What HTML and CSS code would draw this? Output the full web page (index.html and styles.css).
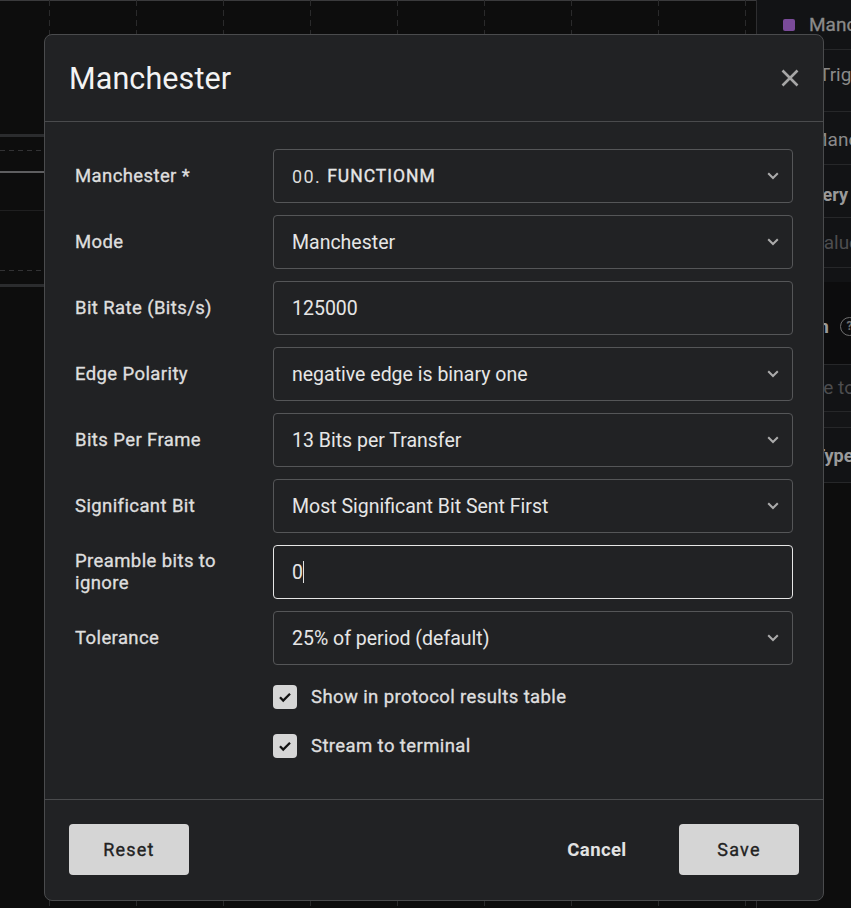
FILE: index.html
```html
<!DOCTYPE html>
<html lang="en">
<head>
<meta charset="utf-8">
<title>Manchester</title>
<link rel="stylesheet" href="styles.css">
</head>
<body>
<div class="app">
  <div class="chart">
    <svg class="grid" width="757" height="908" viewBox="0 0 757 908">
      <line x1="0" y1="0.5" x2="757" y2="0.5" stroke="#3a3a3c" stroke-width="1"/>
      <g stroke="#2a2a2b" stroke-width="1" stroke-dasharray="6 4">
        <line x1="49.5" y1="0" x2="49.5" y2="908"/>
        <line x1="136.5" y1="0" x2="136.5" y2="908"/>
        <line x1="223.5" y1="0" x2="223.5" y2="908"/>
        <line x1="310.5" y1="0" x2="310.5" y2="908"/>
        <line x1="397.5" y1="0" x2="397.5" y2="908"/>
        <line x1="484.5" y1="0" x2="484.5" y2="908"/>
        <line x1="571.5" y1="0" x2="571.5" y2="908"/>
        <line x1="658.5" y1="0" x2="658.5" y2="908"/>
        <line x1="745.5" y1="0" x2="745.5" y2="908"/>
      </g>
      <line x1="0" y1="135.5" x2="757" y2="135.5" stroke="#2b2c2e" stroke-width="3"/>
      <line x1="0" y1="150.5" x2="757" y2="150.5" stroke="#323234" stroke-width="1" stroke-dasharray="5 4"/>
      <line x1="0" y1="172" x2="757" y2="172" stroke="#5e5e60" stroke-width="2"/>
      <line x1="0" y1="210.5" x2="757" y2="210.5" stroke="#1f1f20" stroke-width="1"/>
      <line x1="0" y1="270.5" x2="757" y2="270.5" stroke="#323234" stroke-width="1" stroke-dasharray="5 4"/>
      <line x1="0" y1="285.5" x2="757" y2="285.5" stroke="#2b2c2e" stroke-width="3"/>
      <line x1="756.5" y1="0" x2="756.5" y2="908" stroke="#2e2e30" stroke-width="1"/>
    </svg>
  </div>
  <aside class="panel">
    <div class="p-head"><span class="swatch"></span><span class="p-title">Manchester</span></div>
    <div class="p-row r-trig">Trigger</div>
    <div class="p-row r-name">Manchester</div>
    <div class="p-row r-query">Query</div>
    <div class="p-row r-value">Value</div>
    <div class="p-gap"></div>
    <div class="p-section"><span class="p-sec-title">Function</span><span class="info">?</span></div>
    <div class="p-row r-type">Type to search</div>
    <div class="p-thin"></div>
    <div class="p-row r-typeh">Type</div>
    <div class="p-rest"></div>
  </aside>
</div>

<div class="dialog" role="dialog" aria-label="Manchester">
  <header class="dlg-head">
    <h1 class="dlg-title">Manchester</h1>
    <button class="close" aria-label="Close">
      <svg width="18" height="18" viewBox="0 0 18 18"><path d="M1.5 1.5L16.5 16.5M16.5 1.5L1.5 16.5" stroke="#a6a6a6" stroke-width="2.6" stroke-linecap="butt"/></svg>
    </button>
  </header>

  <div class="dlg-body">
    <div class="form">
      <div class="label">Manchester *</div>
      <div class="field select"><span class="val"><span class="num">00.</span><span class="fn">FUNCTIONM</span></span><svg class="chev" width="12" height="8" viewBox="0 0 12 8"><path d="M1.2 1.2L6 6l4.8-4.8" fill="none" stroke="#ababab" stroke-width="2"/></svg></div>

      <div class="label">Mode</div>
      <div class="field select"><span class="val">Manchester</span><svg class="chev" width="12" height="8" viewBox="0 0 12 8"><path d="M1.2 1.2L6 6l4.8-4.8" fill="none" stroke="#ababab" stroke-width="2"/></svg></div>

      <div class="label">Bit Rate (Bits/s)</div>
      <div class="field"><span class="val">125000</span></div>

      <div class="label">Edge Polarity</div>
      <div class="field select"><span class="val">negative edge is binary one</span><svg class="chev" width="12" height="8" viewBox="0 0 12 8"><path d="M1.2 1.2L6 6l4.8-4.8" fill="none" stroke="#ababab" stroke-width="2"/></svg></div>

      <div class="label">Bits Per Frame</div>
      <div class="field select"><span class="val">13 Bits per Transfer</span><svg class="chev" width="12" height="8" viewBox="0 0 12 8"><path d="M1.2 1.2L6 6l4.8-4.8" fill="none" stroke="#ababab" stroke-width="2"/></svg></div>

      <div class="label">Significant Bit</div>
      <div class="field select"><span class="val">Most Significant Bit Sent First</span><svg class="chev" width="12" height="8" viewBox="0 0 12 8"><path d="M1.2 1.2L6 6l4.8-4.8" fill="none" stroke="#ababab" stroke-width="2"/></svg></div>

      <div class="label">Preamble bits to<br>ignore</div>
      <div class="field focused"><span class="val">0</span><span class="caret"></span></div>

      <div class="label">Tolerance</div>
      <div class="field select"><span class="val">25% of period (default)</span><svg class="chev" width="12" height="8" viewBox="0 0 12 8"><path d="M1.2 1.2L6 6l4.8-4.8" fill="none" stroke="#ababab" stroke-width="2"/></svg></div>
    </div>

    <div class="checks">
      <label class="check"><span class="box"><svg width="24" height="24" viewBox="0 0 24 24"><path d="M7 12.3l3.2 3.2L17 8.7" fill="none" stroke="#111" stroke-width="2.3"/></svg></span><span>Show in protocol results table</span></label>
      <label class="check"><span class="box"><svg width="24" height="24" viewBox="0 0 24 24"><path d="M7 12.3l3.2 3.2L17 8.7" fill="none" stroke="#111" stroke-width="2.3"/></svg></span><span>Stream to terminal</span></label>
    </div>
  </div>

  <footer class="dlg-foot">
    <button class="btn light">Reset</button>
    <div class="right">
      <button class="btn text">Cancel</button>
      <button class="btn light">Save</button>
    </div>
  </footer>
</div>
</body>
</html>
```

FILE: styles.css
```css
* { box-sizing: border-box; }

html, body {
  margin: 0;
  padding: 0;
  background: #0d0d0d;
  font-family: Roboto, "Liberation Sans", Arial, sans-serif;
  overflow: hidden;
}

.app {
  display: flex;
  width: 851px;
  height: 908px;
}

.chart {
  width: 757px;
  flex: none;
  height: 908px;
  background: #0d0d0d;
}

.grid { display: block; }

.panel {
  flex: 1;
  display: flex;
  flex-direction: column;
  background: #121315;
  color: #8a8a8a;
  font-size: 19px;
  white-space: nowrap;
  overflow: hidden;
  min-width: 0;
}

.p-head {
  height: 50px;
  display: flex;
  align-items: center;
  padding-left: 26px;
  gap: 14px;
  border-bottom: 1px solid #262729;
  -webkit-text-stroke: 0.3px currentColor;
}
.swatch {
  width: 12px;
  height: 12px;
  border-radius: 2px;
  background: #7a4b99;
  flex: none;
}
.p-row {
  display: flex;
  align-items: center;
  border-bottom: 1px solid #262729;
}
.r-trig { height: 62px; padding-left: 62px; padding-bottom: 12px; }
.r-name { height: 53px; padding-left: 54px; padding-top: 2px; }
.r-query { height: 53px; padding-left: 43px; font-weight: 700; color: #9a9a9a; font-size: 18px; padding-top: 6px; }
.r-value { height: 50px; padding-left: 55px; color: #4d4d4f; }
.p-gap { height: 14px; }
.p-section {
  height: 83px;
  background: #0c0c0d;
  display: flex;
  align-items: center;
  justify-content: flex-end;
  gap: 11px;
  border-bottom: 1px solid #262729;
  padding-top: 6px;
  font-weight: 700;
  color: #9a9a9a;
}
.info {
  width: 19px;
  height: 19px;
  border: 1.5px solid #6f6f6f;
  border-radius: 50%;
  font-size: 12px;
  color: #6f6f6f;
  display: flex;
  align-items: center;
  justify-content: center;
  flex: none;
  margin-right: -8px;
}
.r-type { height: 47px; padding-left: 36px; color: #4d4d4f; padding-bottom: 2px; }
.p-thin { height: 16px; border-bottom: 1px solid #262729; background: #141517; }
.r-typeh { height: 55px; padding-left: 57px; font-weight: 700; color: #9a9a9a; font-size: 18px; }
.p-rest { flex: 1; background: #0d0d0d; }

/* Dialog */
.dialog {
  position: absolute;
  left: 44px;
  top: 34px;
  width: 780px;
  height: 867px;
  background: #212224;
  border: 1px solid #4a4b4d;
  border-radius: 8px;
  display: flex;
  flex-direction: column;
  color: #e3e3e3;
}

.dlg-head {
  height: 87px;
  flex: none;
  display: flex;
  align-items: center;
  justify-content: space-between;
  padding: 0 24px 0 24px;
  border-bottom: 1px solid #4a4b4d;
}
.dlg-title {
  margin: 0;
  font-size: 30.5px;
  font-weight: 400;
  color: #f3f3f3;
  letter-spacing: 0.1px;
}
.close {
  background: none;
  border: 0;
  padding: 0;
  width: 18px;
  height: 18px;
  display: block;
  cursor: pointer;
}
.close svg { display: block; }

.dlg-body {
  flex: 1;
  padding: 27px 30px 0 30px;
}

.form {
  display: grid;
  grid-template-columns: 198px 520px;
  row-gap: 12px;
  align-items: center;
}

.label {
  font-size: 18.5px;
  font-weight: 400;
  -webkit-text-stroke: 0.35px currentColor;
  color: #dedede;
  line-height: 22px;
  letter-spacing: 0.4px;
}

.field {
  height: 54px;
  border: 1px solid #555658;
  border-radius: 4px;
  display: flex;
  align-items: center;
  padding: 0 13px 0 18px;
  font-size: 19.5px;
  color: #e6e6e6;
}
.field.select { justify-content: space-between; }
.field.focused { border-color: #e6e6e6; }
.val { display: flex; align-items: center; }
.num { font-size: 18px; font-weight: 400; color: #dcdcdc; letter-spacing: 1.4px; }
.fn { font-size: 17.5px; font-weight: 400; -webkit-text-stroke: 0.35px currentColor; margin-left: 6px; letter-spacing: 1px; }
.caret {
  width: 1px;
  height: 22px;
  background: #e0e0e0;
  margin-left: 0;
}
.chev { display: block; flex: none; }

.checks {
  margin-left: 198px;
  margin-top: 20px;
  display: flex;
  flex-direction: column;
  gap: 25px;
}
.check {
  display: flex;
  align-items: center;
  gap: 14px;
  font-size: 18.5px;
  font-weight: 400;
  -webkit-text-stroke: 0.35px currentColor;
  letter-spacing: 0.4px;
  color: #dedede;
  height: 24px;
}
.box {
  width: 24px;
  height: 24px;
  border-radius: 4px;
  background: #d6d6d6;
  flex: none;
  -webkit-text-stroke: 0;
}
.box svg { display: block; }

.dlg-foot {
  height: 101px;
  flex: none;
  border-top: 1px solid #4a4b4d;
  padding: 24px 24px;
  display: flex;
  justify-content: space-between;
  align-items: flex-start;
}
.right { display: flex; gap: 22px; }
.btn {
  font-family: Roboto, "Liberation Sans", Arial, sans-serif;
  height: 51px;
  width: 120px;
  border: 0;
  border-radius: 4px;
  font-size: 18px;
  font-weight: 400;
  letter-spacing: 1.2px;
  cursor: pointer;
  padding: 0;
}
.btn.light { background: #d5d5d5; color: #222; -webkit-text-stroke: 0.35px currentColor; }
.btn.text { background: transparent; color: #e2e2e2; font-weight: 700; font-size: 18.5px; letter-spacing: 0.4px; }
```
